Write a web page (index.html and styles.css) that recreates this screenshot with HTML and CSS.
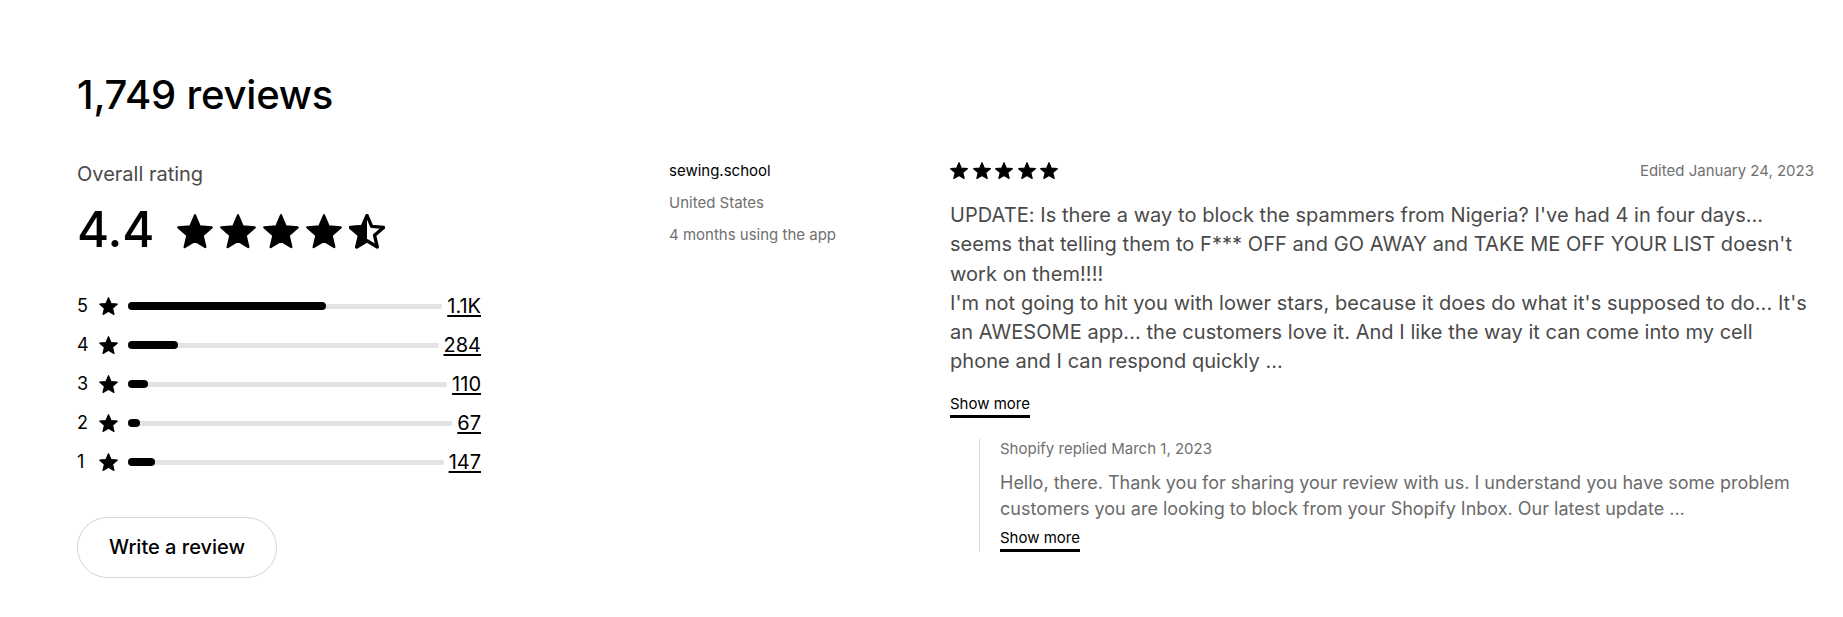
FILE: index.html
```html
<!DOCTYPE html>
<html lang="en">
<head>
<meta charset="utf-8">
<title>Reviews</title>
<link rel="stylesheet" href="styles.css">
</head>
<body>
<svg width="0" height="0" class="defs" aria-hidden="true">
  <defs>
    <path id="star" d="M12 17.27L18.18 21l-1.64-7.03L22 9.24l-7.19-.61L12 2 9.19 8.63 2 9.24l5.46 4.73L5.82 21z"/>
    <clipPath id="lefthalf"><rect x="0" y="0" width="12" height="24"/></clipPath>
  </defs>
</svg>
<main class="page">
  <h1 class="title">1,749 reviews</h1>
  <div class="content">
    <section class="summary">
      <div class="overall-label">Overall rating</div>
      <div class="overall">
        <span class="score">4.4</span>
        <span class="big-stars">
          <svg class="big-star" viewBox="1.2 1.2 21.6 21.6"><use href="#star" class="s-fill"/></svg>
          <svg class="big-star" viewBox="1.2 1.2 21.6 21.6"><use href="#star" class="s-fill"/></svg>
          <svg class="big-star" viewBox="1.2 1.2 21.6 21.6"><use href="#star" class="s-fill"/></svg>
          <svg class="big-star" viewBox="1.2 1.2 21.6 21.6"><use href="#star" class="s-fill"/></svg>
          <svg class="big-star" viewBox="1.2 1.2 21.6 21.6"><use href="#star" class="s-outline"/><use href="#star" class="s-fill" clip-path="url(#lefthalf)"/></svg>
        </span>
      </div>
      <ul class="dist">
        <li class="dist-row"><span class="dist-num">5</span><svg class="row-star" viewBox="1.2 1.2 21.6 21.6"><use href="#star" class="s-fill"/></svg><span class="track"><span class="fill" style="width:63%"></span></span><a class="count" href="#">1.1K</a></li>
        <li class="dist-row"><span class="dist-num">4</span><svg class="row-star" viewBox="1.2 1.2 21.6 21.6"><use href="#star" class="s-fill"/></svg><span class="track"><span class="fill" style="width:16.2%"></span></span><a class="count" href="#">284</a></li>
        <li class="dist-row"><span class="dist-num">3</span><svg class="row-star" viewBox="1.2 1.2 21.6 21.6"><use href="#star" class="s-fill"/></svg><span class="track"><span class="fill" style="width:6.3%"></span></span><a class="count" href="#">110</a></li>
        <li class="dist-row"><span class="dist-num">2</span><svg class="row-star" viewBox="1.2 1.2 21.6 21.6"><use href="#star" class="s-fill"/></svg><span class="track"><span class="fill" style="width:3.8%"></span></span><a class="count" href="#">67</a></li>
        <li class="dist-row"><span class="dist-num">1</span><svg class="row-star" viewBox="1.2 1.2 21.6 21.6"><use href="#star" class="s-fill"/></svg><span class="track"><span class="fill" style="width:8.4%"></span></span><a class="count" href="#">147</a></li>
      </ul>
      <button class="write-btn" type="button">Write a review</button>
    </section>

    <section class="reviewer">
      <div class="reviewer-name">sewing.school</div>
      <div class="reviewer-meta">United States</div>
      <div class="reviewer-meta">4 months using the app</div>
    </section>

    <article class="review">
      <div class="review-head">
        <span class="review-stars">
          <svg class="sm-star" viewBox="1.2 1.2 21.6 21.6"><use href="#star" class="s-fill"/></svg>
          <svg class="sm-star" viewBox="1.2 1.2 21.6 21.6"><use href="#star" class="s-fill"/></svg>
          <svg class="sm-star" viewBox="1.2 1.2 21.6 21.6"><use href="#star" class="s-fill"/></svg>
          <svg class="sm-star" viewBox="1.2 1.2 21.6 21.6"><use href="#star" class="s-fill"/></svg>
          <svg class="sm-star" viewBox="1.2 1.2 21.6 21.6"><use href="#star" class="s-fill"/></svg>
        </span>
        <span class="review-date">Edited January 24, 2023</span>
      </div>
      <p class="review-body">UPDATE: Is there a way to block the spammers from Nigeria? I've had 4 in four days... seems that telling them to F*** OFF and GO AWAY and TAKE ME OFF YOUR LIST doesn't work on them!!!!<br>I'm not going to hit you with lower stars, because it does do what it's supposed to do... It's an AWESOME app... the customers love it. And I like the way it can come into my cell phone and I can respond quickly ...</p>
      <button class="show-more" type="button">Show more</button>
      <div class="reply">
        <div class="reply-head">Shopify replied March 1, 2023</div>
        <p class="reply-body">Hello, there. Thank you for sharing your review with us. I understand you have some problem customers you are looking to block from your Shopify Inbox. Our latest update ...</p>
        <button class="show-more reply-more" type="button">Show more</button>
      </div>
    </article>
  </div>
</main>
</body>
</html>
```

FILE: styles.css
```css
* { box-sizing: border-box; }

html, body {
  margin: 0;
  background: #ffffff;
}

body {
  font-family: Inter, "Noto Sans", "Liberation Sans", sans-serif;
  color: #000;
}

.defs {
  position: absolute;
  width: 0;
  height: 0;
}

.s-fill {
  fill: #000;
  stroke: #000;
  stroke-width: 1.4;
  stroke-linejoin: round;
}

.s-outline {
  fill: none;
  stroke: #000;
  stroke-width: 2;
  stroke-linejoin: round;
}

.page {
  padding: 71px 29px 0 77px;
}

.title {
  margin: 0;
  font-size: 40px;
  line-height: 48px;
  font-weight: 500;
  letter-spacing: -0.2px;
}

.content {
  display: flex;
  margin-top: 42px;
}

/* ---------- Summary column ---------- */
.summary {
  flex: 0 0 404px;
  margin-top: -1px;
  display: flex;
  flex-direction: column;
  align-items: flex-start;
}

.overall-label {
  font-size: 20px;
  line-height: 28px;
  color: #4a4a4a;
}

.overall {
  display: flex;
  align-items: center;
  gap: 22px;
  margin-top: 18px;
  height: 48px;
}

.score {
  font-size: 49px;
  line-height: 48px;
  font-weight: 500;
}

.big-stars {
  display: flex;
  gap: 7px;
  padding-top: 4px;
}

.big-star {
  width: 36px;
  height: 36px;
  display: block;
}

.dist {
  list-style: none;
  margin: 40px 0 0;
  padding: 0;
  width: 404px;
  display: flex;
  flex-direction: column;
  gap: 15px;
}

.dist-row {
  display: flex;
  align-items: center;
  height: 24px;
  font-size: 18px;
  line-height: 24px;
}

.dist-num {
  width: 12px;
  flex: 0 0 12px;
}

.row-star {
  width: 19px;
  height: 19px;
  margin-left: 10px;
  margin-right: 10px;
  display: block;
  flex: 0 0 19px;
}

.track {
  flex: 1;
  height: 8px;
  border-radius: 4px;
  background: linear-gradient(#e3e3e3, #e3e3e3) center / 100% 5px no-repeat;
  display: flex;
}

.fill {
  display: block;
  height: 8px;
  border-radius: 4px;
  background: #000;
}

.count {
  margin-left: 5px;
  font-size: 20px;
  color: #000;
  text-decoration: underline;
  text-decoration-thickness: 1.5px;
  text-underline-offset: 2px;
}

.write-btn {
  margin-top: 43px;
  font-family: inherit;
  font-size: 20px;
  line-height: 23px;
  font-weight: 500;
  color: #000;
  background: #fff;
  border: 1px solid #d4d4d4;
  border-radius: 31px;
  padding: 18px 31px;
  cursor: pointer;
}

/* ---------- Reviewer column ---------- */
.reviewer {
  flex: 0 0 281px;
  margin-left: 188px;
  display: flex;
  flex-direction: column;
  gap: 12px;
  font-size: 15px;
  line-height: 20px;
}

.reviewer-name {
  color: #000;
}

.reviewer-meta {
  color: #707070;
}

/* ---------- Review column ---------- */
.review {
  flex: 1;
  min-width: 0;
}

.review-head {
  display: flex;
  align-items: center;
  justify-content: space-between;
  height: 20px;
}

.review-stars {
  display: flex;
  gap: 4.5px;
}

.sm-star {
  width: 18px;
  height: 18px;
  display: block;
}

.review-date {
  font-size: 15px;
  line-height: 20px;
  color: #707070;
}

.review-body {
  margin: 20px 0 0;
  font-size: 20px;
  line-height: 29.3px;
  letter-spacing: 0.05px;
  color: #4a4a4a;
}

.show-more {
  display: inline-block;
  margin-top: 17.5px;
  padding: 0 0 1px;
  font-family: inherit;
  font-size: 15px;
  line-height: 20px;
  color: #000;
  background: none;
  border: 0;
  border-bottom: 3px solid #000;
  cursor: pointer;
}

.reply {
  margin: 21px 0 0 29px;
  padding-left: 20px;
  border-left: 1px solid #d9d9d9;
}

.reply-head {
  font-size: 15px;
  line-height: 20px;
  color: #707070;
}

.reply-body {
  margin: 11px 0 0;
  font-size: 18px;
  line-height: 26px;
  color: #6b6b6b;
}

.reply-more {
  margin-top: 6px;
}
```
